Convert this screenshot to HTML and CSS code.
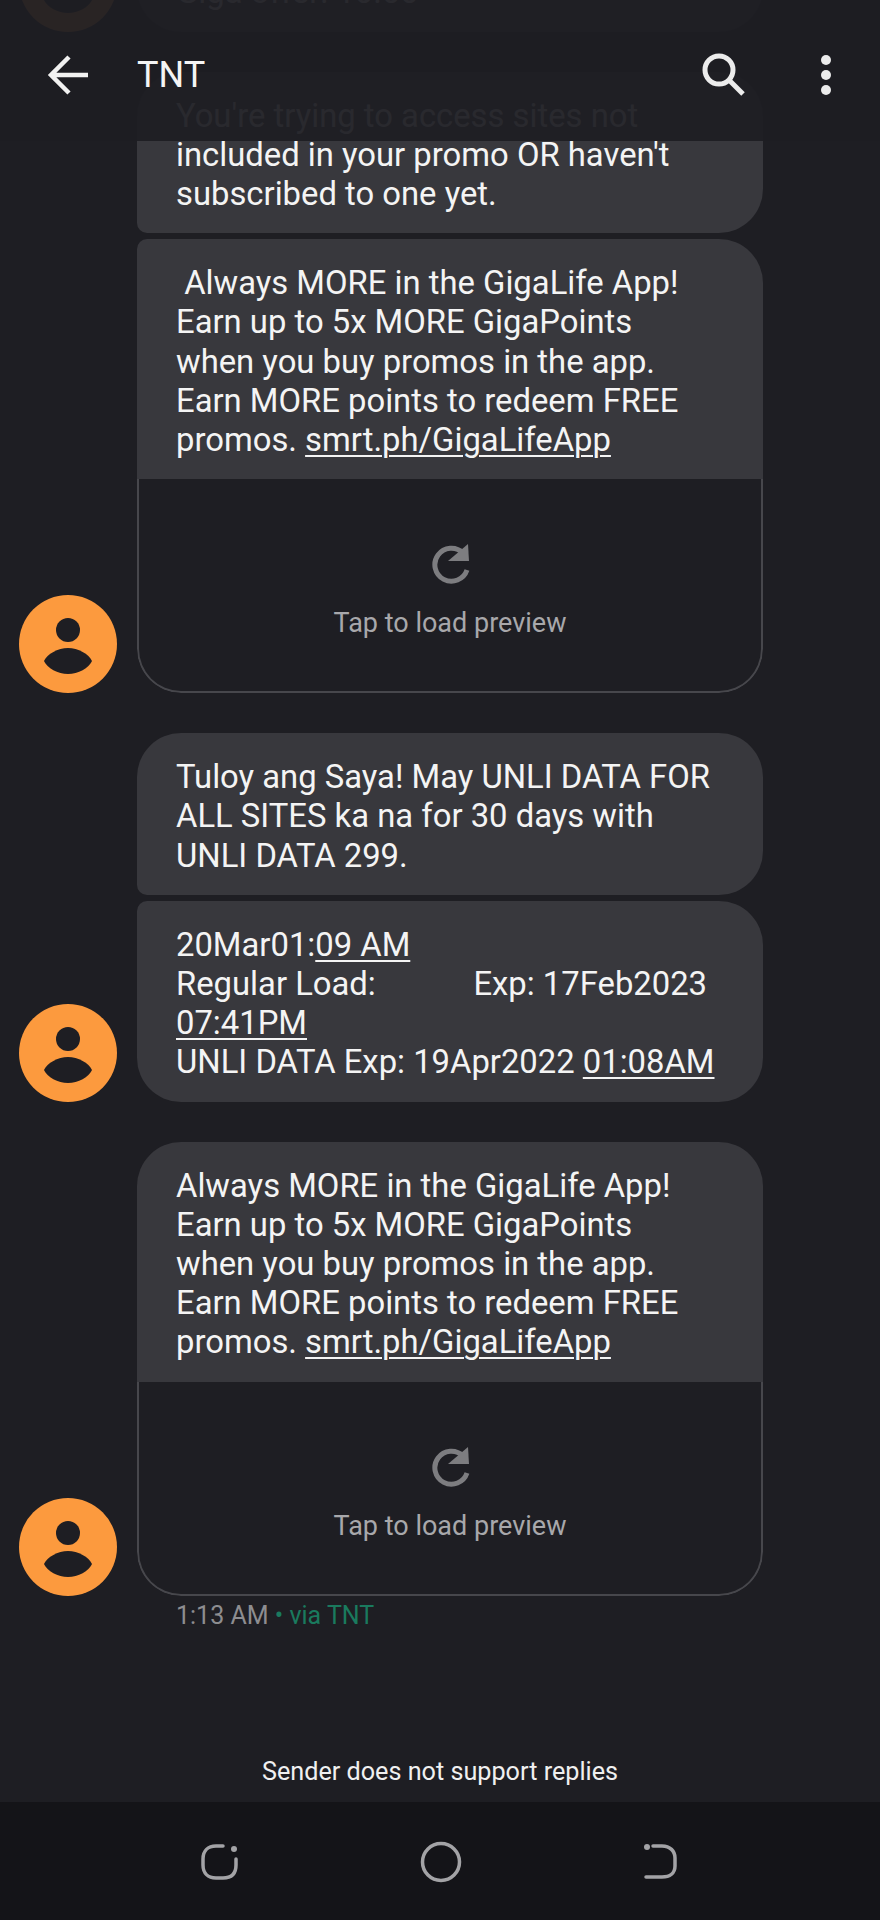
FILE: index.html
```html
<!DOCTYPE html>
<html lang="en">
<head>
  <meta charset="UTF-8" />
  <meta name="viewport" content="width=device-width, initial-scale=1.0" />
  <title>TNT</title>
  <link rel="stylesheet" href="styles.css">
</head>
<body>
  <div class="app">
    
    <header class="toolbar">
      <svg class="back-icon" width="44" height="44" viewBox="0 0 44 44">
        <path d="M41 22H5M22 4L4 22l18 18" fill="none" stroke="#f1f1f1" stroke-width="4.5" />
      </svg>
      <h1 class="title">TNT</h1>
      <svg class="search-icon" width="48" height="48" viewBox="0 0 48 48">
        <circle cx="19" cy="19" r="14" fill="none" stroke="#ececec" stroke-width="5" />
        <path d="M29 29l14 14" stroke="#ececec" stroke-width="5" />
      </svg>
      <svg class="more-icon" width="12" height="42" viewBox="0 0 12 42">
        <circle cx="6" cy="6" r="5" fill="#ececec" />
        <circle cx="6" cy="21" r="5" fill="#ececec" />
        <circle cx="6" cy="36" r="5" fill="#ececec" />
      </svg>
    </header>

    <main class="thread">
      <section class="group">
        <svg class="avatar" width="98" height="98" viewBox="0 0 98 98">
          <circle cx="49" cy="49" r="49" fill="#fc9a3e" />
          <circle cx="49" cy="35" r="12" fill="#1e1e23" />
          <path d="M25 66c3-7 14-13 24-13s21 6 24 13c-3 7-14 13-24 13s-21-6-24-13z" fill="#1e1e23" />
        </svg>
        <div class="bubbles">
          <div class="bubble bubble-last"><p class="text">Sorry, you have no promo yet.
Reply to continue.
Giga offer: 10.00</p></div>
        </div>
      </section>

      <section class="group">
        <svg class="avatar" width="98" height="98" viewBox="0 0 98 98">
          <circle cx="49" cy="49" r="49" fill="#fc9a3e" />
          <circle cx="49" cy="35" r="12" fill="#1e1e23" />
          <path d="M25 66c3-7 14-13 24-13s21 6 24 13c-3 7-14 13-24 13s-21-6-24-13z" fill="#1e1e23" />
        </svg>
        <div class="bubbles">
          <div class="bubble bubble-first"><p class="text">You're trying to access sites not
included in your promo OR haven't
subscribed to one yet.</p></div>
          <div class="bubble bubble-last card">
            <p class="text"> Always MORE in the GigaLife App!
Earn up to 5x MORE GigaPoints
when you buy promos in the app.
Earn MORE points to redeem FREE
promos. <a class="link">smrt.ph/GigaLifeApp</a></p>
            <div class="preview">
              <svg class="reload-icon" width="42" height="42" viewBox="0 0 42 42">
                <path d="M38 27a16.5 16.5 0 1 1-4-17" fill="none" stroke="#7d7d80" stroke-width="5" />
                <path d="M39 1l1 17H19z" fill="#7d7d80" />
              </svg>
              <span class="preview-label">Tap to load preview</span>
            </div>
          </div>
        </div>
      </section>

      <section class="group">
        <svg class="avatar" width="98" height="98" viewBox="0 0 98 98">
          <circle cx="49" cy="49" r="49" fill="#fc9a3e" />
          <circle cx="49" cy="35" r="12" fill="#1e1e23" />
          <path d="M25 66c3-7 14-13 24-13s21 6 24 13c-3 7-14 13-24 13s-21-6-24-13z" fill="#1e1e23" />
        </svg>
        <div class="bubbles">
          <div class="bubble bubble-first"><p class="text">Tuloy ang Saya! May UNLI DATA FOR
ALL SITES ka na for 30 days with
UNLI DATA 299.</p></div>
          <div class="bubble bubble-last"><p class="text">20Mar01:<a class="link">09 AM</a>
Regular Load:            Exp: 17Feb2023
<a class="link">07:41PM</a>
UNLI DATA Exp: 19Apr2022 <a class="link">01:08AM</a></p></div>
        </div>
      </section>

      <section class="group">
        <svg class="avatar" width="98" height="98" viewBox="0 0 98 98">
          <circle cx="49" cy="49" r="49" fill="#fc9a3e" />
          <circle cx="49" cy="35" r="12" fill="#1e1e23" />
          <path d="M25 66c3-7 14-13 24-13s21 6 24 13c-3 7-14 13-24 13s-21-6-24-13z" fill="#1e1e23" />
        </svg>
        <div class="bubbles">
          <div class="bubble bubble-last card">
            <p class="text">Always MORE in the GigaLife App!
Earn up to 5x MORE GigaPoints
when you buy promos in the app.
Earn MORE points to redeem FREE
promos. <a class="link">smrt.ph/GigaLifeApp</a></p>
            <div class="preview">
              <svg class="reload-icon" width="42" height="42" viewBox="0 0 42 42">
                <path d="M38 27a16.5 16.5 0 1 1-4-17" fill="none" stroke="#7d7d80" stroke-width="5" />
                <path d="M39 1l1 17H19z" fill="#7d7d80" />
              </svg>
              <span class="preview-label">Tap to load preview</span>
            </div>
          </div>
        </div>
      </section>

      <p class="meta">1:13 AM <span class="via">• via TNT</span></p>
    </main>

    <p class="no-reply">Sender does not support replies</p>

    <nav class="navbar">
      <svg width="38" height="36" viewBox="0 0 38 36">
        <path d="M35 15v6c0 9-5 13-13 13H15C7 34 2 29 2 21V15C2 7 7 2 15 2h7" fill="none" stroke="#a3a3a6" stroke-width="3.5" stroke-linecap="round" />
        <circle cx="33" cy="5" r="3" fill="#a3a3a6" />
      </svg>
      <svg width="42" height="42" viewBox="0 0 42 42">
        <circle cx="21" cy="21" r="18.5" fill="none" stroke="#a3a3a6" stroke-width="3.5" />
      </svg>
      <svg width="36" height="36" viewBox="0 0 36 36">
        <path d="M3 33h16c8 0 13-4 13-11V14c0-7-5-12-13-12H10" fill="none" stroke="#a3a3a6" stroke-width="3.5" stroke-linecap="round" />
        <circle cx="4" cy="3" r="3" fill="#a3a3a6" />
      </svg>
    </nav>
  </div>
</body>
</html>
```

FILE: styles.css
```css
body {
  font-family: Roboto, "Liberation Sans", sans-serif;
  background-color: #1e1e23;
  margin: 0;
  color: #f4f4f4;
}
.app {
  position: relative;
  height: 1920px;
  overflow: hidden;
  display: flex;
  flex-direction: column;
}
.toolbar {
  position: absolute;
  top: 0;
  left: 0;
  right: 0;
  z-index: 2;
  height: 133px;
  padding-top: 8px;
  display: flex;
  align-items: center;
  background-color: rgba(30, 30, 35, 0.95);
}
.back-icon {
  margin-left: 47px;
}
.title {
  font-size: 36px;
  font-weight: 400;
  margin: 0 0 0 46px;
  flex: 1;
  color: #f4f4f4;
}
.search-icon {
  margin-right: 72px;
}
.more-icon {
  margin-right: 48px;
}
.thread {
  flex: 1;
  margin-top: -130px;
  display: flex;
  flex-direction: column;
  gap: 40px;
  padding-left: 19px;
}
.group {
  display: flex;
  align-items: flex-end;
  gap: 20px;
}
.avatar {
  flex-shrink: 0;
}
.bubbles {
  width: 626px;
  display: flex;
  flex-direction: column;
  gap: 6px;
}
.bubble {
  background-color: #38383d;
  border-radius: 44px;
  overflow: hidden;
}
.bubble-first {
  border-bottom-left-radius: 10px;
}
.bubble-last {
  border-top-left-radius: 10px;
}
.bubble-last:only-child {
  border-top-left-radius: 44px;
}
.text {
  margin: 0;
  padding: 25px 30px 19px 39px;
  font-size: 32.8px;
  line-height: 39.2px;
  white-space: pre-wrap;
}
.link {
  text-decoration: underline;
  text-decoration-thickness: 2px;
  text-underline-offset: 4px;
}
.card {
  background-color: transparent;
}
.card .text {
  background-color: #38383d;
}
.preview {
  height: 214px;
  display: flex;
  flex-direction: column;
  align-items: center;
  padding-top: 64px;
  box-sizing: border-box;
  border: 2px solid #47474c;
  border-top: none;
  border-radius: 0 0 44px 44px;
}
.reload-icon {
  margin-bottom: 22px;
}
.preview-label {
  font-size: 27px;
  line-height: 32px;
  color: #a8a8ab;
}
.meta {
  margin: -38px 0 0 157px;
  font-size: 25px;
  line-height: 36px;
  color: #8d8d90;
}
.via {
  color: #1a7a5e;
}
.no-reply {
  margin: 0;
  padding: 15px 0 13px;
  text-align: center;
  font-size: 25.2px;
  line-height: 34px;
  color: #f0f0f0;
}
.navbar {
  height: 118px;
  padding: 2px 201px 0;
  box-sizing: border-box;
  background-color: #141418;
  display: flex;
  justify-content: space-between;
  align-items: center;
}
```
